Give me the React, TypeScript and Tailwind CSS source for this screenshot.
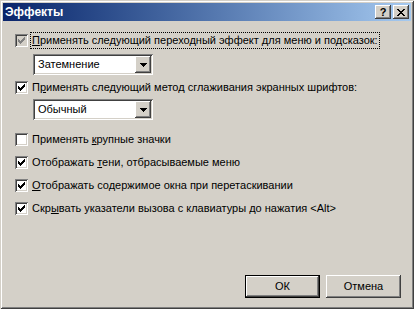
const raised =
  "shadow-[inset_-1px_-1px_#404040,inset_1px_1px_#ffffff,inset_-2px_-2px_#808080,inset_2px_2px_#d4d0c8]";
const sunken =
  "shadow-[inset_1px_1px_#808080,inset_-1px_-1px_#ffffff,inset_2px_2px_#404040,inset_-2px_-2px_#d4d0c8]";

const CheckMark = ({ color }: { color: string }) => (
  <svg width="7" height="7" viewBox="0 0 7 7" shapeRendering="crispEdges">
    <path
      fill={color}
      d="M0 2h1v3H0z M1 3h1v3H1z M2 4h1v3H2z M3 3h1v3H3z M4 2h1v3H4z M5 1h1v3H5z M6 0h1v3H6z"
    />
  </svg>
);

const CheckBox = ({ checked, disabled }: { checked: boolean; disabled?: boolean }) => (
  <div
    className={`flex h-[13px] w-[13px] shrink-0 items-center justify-center ${sunken} ${
      disabled ? "bg-[#d4d0c8]" : "bg-white"
    }`}
  >
    {checked && <CheckMark color={disabled ? "#808080" : "#000000"} />}
  </div>
);

const DownArrow = () => (
  <svg width="7" height="4" viewBox="0 0 7 4" shapeRendering="crispEdges">
    <path fill="#000" d="M0 0h7v1H0z M1 1h5v1H1z M2 2h3v1H2z M3 3h1v1H3z" />
  </svg>
);

const Combo = ({ value, className }: { value: string; className: string }) => (
  <div className={`flex h-[21px] w-[120px] items-center p-[2px] bg-white ${sunken} ${className}`}>
    <span className="flex-1 pl-[3px] leading-none">{value}</span>
    <div className={`flex h-[17px] w-[16px] items-center justify-center bg-[#d4d0c8] ${raised}`}>
      <DownArrow />
    </div>
  </div>
);

type RowProps = {
  checked: boolean;
  disabled?: boolean;
  focused?: boolean;
  className: string;
  children: React.ReactNode;
};

const Row = ({ checked, disabled, focused, className, children }: RowProps) => (
  <div className={`flex h-[17px] items-center ${className}`}>
    <CheckBox checked={checked} disabled={disabled} />
    <span
      className={`ml-[3px] px-[1px] leading-[15px] whitespace-nowrap ${
        focused ? "outline outline-1 outline-dotted outline-black" : ""
      }`}
    >
      {children}
    </span>
  </div>
);

const Btn = ({ label, isDefault }: { label: string; isDefault?: boolean }) => (
  <div
    className={`flex h-[23px] w-[75px] items-center justify-center bg-[#d4d0c8] ${
      isDefault ? "border border-black" : ""
    } ${raised}`}
  >
    {label}
  </div>
);

export default function App() {
  return (
    <div
      className="flex h-[309px] w-[414px] flex-col bg-[#d4d0c8] p-[3px] text-[11px] text-black shadow-[inset_1px_1px_#d4d0c8,inset_-1px_-1px_#404040,inset_2px_2px_#ffffff,inset_-2px_-2px_#808080]"
      style={{ fontFamily: '"Liberation Sans", Arial, sans-serif' }}
    >
      {/* Title bar */}
      <div className="flex h-[18px] items-center bg-linear-to-r from-[#0a246a] to-[#a6caf0] pl-[2px] pr-[2px]">
        <span className="flex-1 text-[12px] font-bold text-white">Эффекты</span>
        <div className={`flex h-[14px] w-[16px] items-center justify-center bg-[#d4d0c8] ${raised}`}>
          <span className="text-[11px] font-bold leading-none">?</span>
        </div>
        <div className={`ml-[2px] flex h-[14px] w-[16px] items-center justify-center bg-[#d4d0c8] ${raised}`}>
          <svg width="8" height="7" viewBox="0 0 8 7" shapeRendering="crispEdges">
            <path
              fill="#000"
              d="M0 0h2v1H0z M6 0h2v1H6z M1 1h2v1H1z M5 1h2v1H5z M2 2h4v1H2z M3 3h2v1H3z M2 4h4v1H2z M1 5h2v1H1z M5 5h2v1H5z M0 6h2v1H0z M6 6h2v1H6z"
            />
          </svg>
        </div>
      </div>

      {/* Content */}
      <div className="flex flex-1 flex-col pl-[12px]">
        <Row checked disabled focused className="mt-[11px]">
          <u>П</u>рименять следующий переходный эффект для меню и подсказок:
        </Row>
        <Combo value="Затемнение" className="ml-[18px] mt-[5px]" />

        <Row checked className="mt-[4px]">
          П<u>р</u>именять следующий метод сглаживания экранных шрифтов:
        </Row>
        <Combo value="Обычный" className="ml-[18px] mt-[3px]" />

        <Row checked={false} className="mt-[11px]">
          Применять <u>к</u>рупные значки
        </Row>
        <Row checked className="mt-[6px]">
          Отображать <u>т</u>ени, отбрасываемые меню
        </Row>
        <Row checked className="mt-[6px]">
          <u>О</u>тображать содержимое окна при перетаскивании
        </Row>
        <Row checked className="mt-[6px]">
          Скр<u>ы</u>вать указатели вызова с клавиатуры до нажатия &lt;Alt&gt;
        </Row>
      </div>

      {/* Buttons */}
      <div className="flex justify-end gap-[6px] pb-[8px] pr-[10px]">
        <Btn label="ОК" isDefault />
        <Btn label="Отмена" />
      </div>
    </div>
  );
}
